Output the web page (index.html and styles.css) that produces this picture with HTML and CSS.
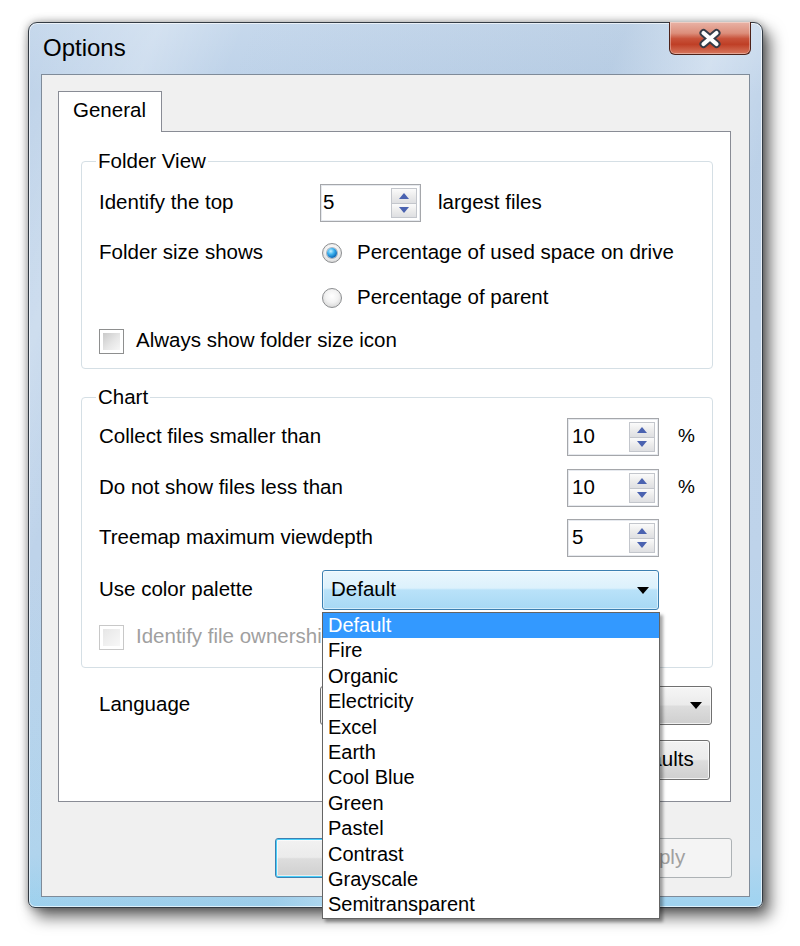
FILE: index.html
```html
<!DOCTYPE html>
<html>
<head>
<meta charset="utf-8">
<title>Options</title>
<link rel="stylesheet" href="styles.css">
</head>
<body>
<div class="screen">
  <div class="window">
    <div class="titlebar">
      <div class="title">Options</div>
      <div class="close-btn">
        <svg width="26" height="21" viewBox="0 0 26 21">
          <path d="M6.5 5 L19.5 16 M19.5 5 L6.5 16" stroke="#363c48" stroke-width="8" stroke-linecap="round" fill="none"/>
          <path d="M6.5 5 L19.5 16 M19.5 5 L6.5 16" stroke="#ffffff" stroke-width="4.2" stroke-linecap="round" fill="none"/>
        </svg>
      </div>
    </div>
    <div class="client">
      <div class="tabs"><div class="tab">General</div></div>
      <div class="panel">
        <fieldset class="group">
          <legend>Folder View</legend>
          <div class="row f1">
            <span class="lbl lbl-f">Identify the top</span>
            <div class="spin spin-wide">
              <span class="val">5</span>
              <div class="spin-btns"><span class="sb"><i class="up"></i></span><span class="sb"><i class="down"></i></span></div>
            </div>
            <span class="after">largest files</span>
          </div>
          <div class="row f2">
            <span class="lbl lbl-f">Folder size shows</span>
            <span class="radio checked"></span>
            <span class="txt">Percentage of used space on drive</span>
          </div>
          <div class="row f3">
            <span class="lbl lbl-f"></span>
            <span class="radio"></span>
            <span class="txt">Percentage of parent</span>
          </div>
          <div class="row f4">
            <span class="check"></span>
            <span class="txt">Always show folder size icon</span>
          </div>
        </fieldset>

        <fieldset class="group chart">
          <legend>Chart</legend>
          <div class="row c1">
            <span class="lbl lbl-c">Collect files smaller than</span>
            <div class="spin spin-narrow">
              <span class="val">10</span>
              <div class="spin-btns"><span class="sb"><i class="up"></i></span><span class="sb"><i class="down"></i></span></div>
            </div>
            <span class="pct">%</span>
          </div>
          <div class="row c2">
            <span class="lbl lbl-c">Do not show files less than</span>
            <div class="spin spin-narrow">
              <span class="val">10</span>
              <div class="spin-btns"><span class="sb"><i class="up"></i></span><span class="sb"><i class="down"></i></span></div>
            </div>
            <span class="pct">%</span>
          </div>
          <div class="row c3">
            <span class="lbl lbl-c">Treemap maximum viewdepth</span>
            <div class="spin spin-narrow">
              <span class="val">5</span>
              <div class="spin-btns"><span class="sb"><i class="up"></i></span><span class="sb"><i class="down"></i></span></div>
            </div>
          </div>
          <div class="row c4">
            <span class="lbl lbl-p">Use color palette</span>
            <div class="combo-wrap">
              <div class="combo active">
                <span class="ctext">Default</span>
                <i class="arrow"></i>
              </div>
              <ul class="dropdown">
                <li class="sel">Default</li>
                <li>Fire</li>
                <li>Organic</li>
                <li>Electricity</li>
                <li>Excel</li>
                <li>Earth</li>
                <li>Cool Blue</li>
                <li>Green</li>
                <li>Pastel</li>
                <li>Contrast</li>
                <li>Grayscale</li>
                <li>Semitransparent</li>
              </ul>
            </div>
          </div>
          <div class="row c5">
            <span class="check disabled"></span>
            <span class="txt dim">Identify file ownership</span>
          </div>
        </fieldset>

        <div class="lang-row">
          <span class="lbl lbl-l">Language</span>
          <div class="combo lang">
            <span class="ctext"></span>
            <i class="arrow"></i>
          </div>
        </div>
        <div class="restore-row">
          <div class="btn restore"><span class="btext">Restore defaults</span></div>
        </div>
      </div>
      <div class="buttons">
        <div class="btn default"></div>
        <div class="btn"><span class="btext">Cancel</span></div>
        <div class="btn disabled"><span class="btext">Apply</span></div>
      </div>
    </div>
  </div>
</div>
</body>
</html>
```

FILE: styles.css
```css
html, body {
  margin: 0;
  background: #ffffff;
}

body {
  font-family: "Liberation Sans", Arial, sans-serif;
  font-size: 20.5px;
  color: #000;
}

.screen {
  height: 946px;
  box-sizing: border-box;
  padding: 22px 0 0 28px;
}

.window {
  width: 735px;
  height: 886px;
  box-sizing: border-box;
  border: 1px solid #333b44;
  border-radius: 9px 9px 7px 7px;
  background:
    linear-gradient(112deg, rgba(255,255,255,0) 0%, rgba(255,255,255,0.25) 12%, rgba(255,255,255,0) 20%, rgba(120,150,180,0.10) 55%, rgba(255,255,255,0.3) 64%, rgba(255,255,255,0) 72%),
    linear-gradient(180deg, #c6d8ec 0%, #bcd1e8 8%, #bed3ea 60%, #b2d6ef 94%, #9fd3f0 100%);
  box-shadow: 7px 9px 16px rgba(0,0,0,0.6), 0 0 8px rgba(0,0,0,0.35), inset 0 0 0 1px rgba(255,255,255,0.65);
  display: flex;
  flex-direction: column;
}

.titlebar {
  height: 51px;
  display: flex;
  justify-content: space-between;
  align-items: flex-start;
}

.title {
  padding: 11px 0 0 14px;
  font-size: 24px;
  line-height: 28px;
  color: #000;
}

.close-btn {
  width: 82px;
  height: 33px;
  margin: -1px 11px 0 0;
  box-sizing: border-box;
  border: 1px solid #4d2219;
  border-top: none;
  border-radius: 0 0 6px 6px;
  background: linear-gradient(180deg, #e9b3a6 0%, #dc8e7b 35%, #c8523a 52%, #bf3f26 70%, #d7785f 100%);
  box-shadow: inset 0 0 0 1px rgba(255,255,255,0.35);
  display: flex;
  align-items: center;
  justify-content: center;
}

.client {
  margin: 0 12px;
  height: 823px;
  box-sizing: border-box;
  border: 1px solid #7f8b99;
  background: #f0f0f0;
  padding: 16px 18px 0 16px;
}

.tabs {
  display: flex;
}

.tab {
  position: relative;
  z-index: 1;
  width: 104px;
  height: 41px;
  box-sizing: border-box;
  margin-bottom: -1px;
  border: 1px solid #898c95;
  border-bottom: none;
  background: #ffffff;
  padding: 0 0 5px 14px;
  display: flex;
  align-items: center;
}

.panel {
  height: 671px;
  box-sizing: border-box;
  border: 1px solid #898c95;
  background: #ffffff;
  padding: 17px 17px 0 22px;
}

.group {
  margin: 0;
  border: 1px solid #d5dfe5;
  border-radius: 4px;
  padding: 0 17px 12px 17px;
  min-width: 0;
}

.group legend {
  padding: 0 2px;
  margin-left: -3px;
  line-height: 24px;
}

.group.chart {
  margin-top: 16px;
  padding-bottom: 15px;
}

.row {
  display: flex;
  align-items: center;
  white-space: nowrap;
}

.f1 { height: 38px; margin-top: 11px; }
.f2 { height: 30px; margin-top: 16px; }
.f3 { height: 30px; margin-top: 15px; }
.f4 { height: 30px; margin-top: 13px; }

.c1 { height: 38px; margin-top: 9px; }
.c2 { height: 38px; margin-top: 13px; }
.c3 { height: 38px; margin-top: 12px; }
.c4 { height: 40px; margin-top: 13px; }
.c5 { height: 30px; margin-top: 12px; }

.lbl, .txt, .after, .pct, .val, .ctext, .btext {
  line-height: 24px;
  padding-bottom: 3px;
}

.lbl { flex: none; }
.lbl-f { width: 221px; }
.lbl-c { width: 468px; }
.lbl-p { width: 223px; }
.lbl-l { width: 221px; }

.after { margin-left: 17px; }
.pct { margin-left: 19px; font-size: 19px; }

.spin {
  height: 38px;
  box-sizing: border-box;
  border: 1px solid #a5a7ab;
  box-shadow: inset 0 0 0 1px #e6e9ee;
  background: #fff;
  display: flex;
  align-items: center;
  justify-content: space-between;
  padding: 0 3px 0 2px;
}
.spin-wide { width: 101px; }
.spin-narrow { width: 92px; padding-left: 4px; }

.spin-btns {
  width: 26px;
  height: 30px;
  display: flex;
  flex-direction: column;
}
.sb {
  flex: 1;
  box-sizing: border-box;
  border: 1px solid #c3c6cc;
  background: linear-gradient(180deg, #fbfbfb 0%, #ececec 50%, #dedfe2 100%);
  display: flex;
  align-items: center;
  justify-content: center;
}
.sb + .sb { border-top: none; }
.sb .up {
  width: 0; height: 0;
  border-left: 5.5px solid transparent;
  border-right: 5.5px solid transparent;
  border-bottom: 6px solid #4a62b0;
}
.sb .down {
  width: 0; height: 0;
  border-left: 5.5px solid transparent;
  border-right: 5.5px solid transparent;
  border-top: 6px solid #4a62b0;
}

.radio {
  flex: none;
  width: 20px;
  height: 20px;
  box-sizing: border-box;
  border-radius: 50%;
  border: 1px solid #8c8e90;
  background: radial-gradient(circle at 50% 40%, #ffffff 0%, #f2f2f2 45%, #d8d8d8 80%, #c4c4c4 100%);
  margin: 0 15px 0 2px;
  display: flex;
  align-items: center;
  justify-content: center;
}
.radio.checked::after {
  content: "";
  width: 10px;
  height: 10px;
  border-radius: 50%;
  background: radial-gradient(circle at 38% 32%, #c6f0ff 0%, #3db2ee 35%, #0f6fbd 70%, #073b6d 100%);
  box-shadow: 0 0 0 1px rgba(30,60,100,0.35);
}

.check {
  flex: none;
  width: 25px;
  height: 25px;
  box-sizing: border-box;
  border: 1px solid #8e8f8f;
  padding: 3px;
  background: linear-gradient(135deg, #c9c9c9 0%, #e6e6e6 55%, #f6f6f6 100%) content-box, #ffffff;
  margin-right: 12px;
}
.check.disabled {
  border-color: #c8c8c8;
  background: linear-gradient(135deg, #e6e6e6 0%, #f1f1f1 60%, #f8f8f8 100%) content-box, #ffffff;
}

.dim { color: #a0a0a0; }

.combo-wrap {
  position: relative;
  width: 337px;
  height: 40px;
}

.combo {
  height: 40px;
  box-sizing: border-box;
  border-radius: 3px;
  display: flex;
  align-items: center;
  justify-content: space-between;
  padding: 0 9px 0 8px;
}
.combo.active {
  border: 1px solid #3c7fb1;
  background: linear-gradient(180deg, #eaf6fd 0%, #dcf1fc 45%, #b9e2f9 50%, #a7d8f4 100%);
  box-shadow: inset 0 0 0 1px rgba(255,255,255,0.5);
}
.combo .arrow {
  width: 0; height: 0;
  border-left: 6.5px solid transparent;
  border-right: 6.5px solid transparent;
  border-top: 7px solid #000;
}

.dropdown {
  position: absolute;
  top: 42px;
  left: 0;
  z-index: 5;
  width: 338px;
  box-sizing: border-box;
  margin: 0;
  padding: 0;
  list-style: none;
  border: 1px solid #646464;
  background: #ffffff;
  box-shadow: 3px 3px 3px rgba(0,0,0,0.35);
  font-size: 20px;
}
.dropdown li {
  height: 25.4px;
  line-height: 25.4px;
  padding-left: 5px;
}
.dropdown li.sel {
  background: #3399ff;
  color: #ffffff;
}

.lang-row {
  display: flex;
  align-items: center;
  margin: 18px 0 0 18px;
  height: 39px;
}
.combo.lang {
  width: 392px;
  height: 39px;
  border: 1px solid #707070;
  background: linear-gradient(180deg, #f6f6f6 0%, #ebebeb 48%, #dddddd 52%, #cfcfcf 100%);
  box-shadow: inset 0 0 0 1px rgba(255,255,255,0.7);
}

.restore-row {
  display: flex;
  justify-content: flex-end;
  margin: 15px 3px 0 0;
}

.btn {
  height: 40px;
  box-sizing: border-box;
  border: 1px solid #707070;
  border-radius: 3px;
  background: linear-gradient(180deg, #f2f2f2 0%, #ebebeb 48%, #dddddd 52%, #cfcfcf 100%);
  box-shadow: inset 0 0 0 1px rgba(255,255,255,0.75);
  display: flex;
  align-items: center;
  justify-content: center;
  white-space: nowrap;
}
.btn.restore { width: 182px; }

.buttons {
  display: flex;
  justify-content: flex-end;
  gap: 11px;
  margin-top: 36px;
  margin-right: -1px;
}
.buttons .btn { width: 145px; }
.btn.default {
  border-color: #3c7fb1;
  box-shadow: inset 0 0 0 1px #48d0fb, inset 0 0 0 2px rgba(255,255,255,0.6);
}
.btn.disabled {
  border-color: #adb2b5;
  background: #f4f4f4;
  color: #a0a0a0;
  box-shadow: none;
}
```
